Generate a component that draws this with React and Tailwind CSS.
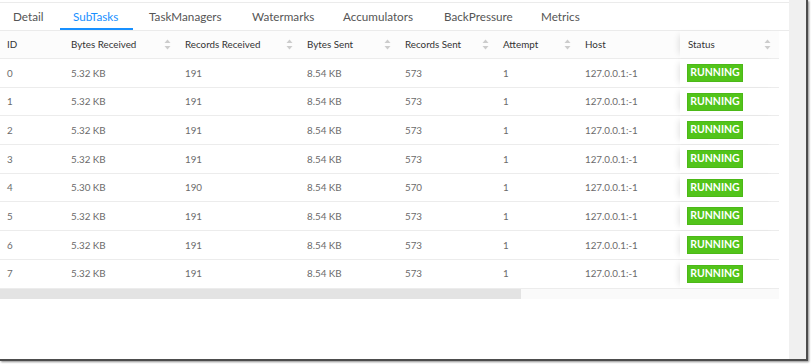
import React from "react";

const tabs = [
  { label: "Detail", w: "w-[60px]" },
  { label: "SubTasks", w: "w-[76px]", active: true },
  { label: "TaskManagers", w: "w-[103px]" },
  { label: "Watermarks", w: "w-[91px]" },
  { label: "Accumulators", w: "w-[101px]" },
  { label: "BackPressure", w: "w-[97px]" },
  { label: "Metrics", w: "w-[80px]" },
];

const cols = [
  { label: "ID", w: "w-[64px]", sort: false },
  { label: "Bytes Received", w: "w-[114px]", sort: true },
  { label: "Records Received", w: "w-[122px]", sort: true },
  { label: "Bytes Sent", w: "w-[98px]", sort: true },
  { label: "Records Sent", w: "w-[98px]", sort: true },
  { label: "Attempt", w: "w-[82px]", sort: true },
  { label: "Host", w: "w-[102px]", sort: false },
];

const rows = [
  ["0", "5.32 KB", "191", "8.54 KB", "573", "1", "127.0.0.1:-1"],
  ["1", "5.32 KB", "191", "8.54 KB", "573", "1", "127.0.0.1:-1"],
  ["2", "5.32 KB", "191", "8.54 KB", "573", "1", "127.0.0.1:-1"],
  ["3", "5.32 KB", "191", "8.54 KB", "573", "1", "127.0.0.1:-1"],
  ["4", "5.30 KB", "190", "8.54 KB", "570", "1", "127.0.0.1:-1"],
  ["5", "5.32 KB", "191", "8.54 KB", "573", "1", "127.0.0.1:-1"],
  ["6", "5.32 KB", "191", "8.54 KB", "573", "1", "127.0.0.1:-1"],
  ["7", "5.32 KB", "191", "8.54 KB", "573", "1", "127.0.0.1:-1"],
];

function SortIcon() {
  return (
    <svg width="7" height="11" viewBox="0 0 7 11" className="shrink-0">
      <path d="M3.5 0.5 L6.5 4 L0.5 4 Z" fill="#cccccc" />
      <path d="M3.5 10.5 L6.5 7 L0.5 7 Z" fill="#cccccc" />
    </svg>
  );
}

export default function App() {
  return (
    <div className="w-[811px] h-[364px] bg-white overflow-hidden font-['Lato',sans-serif]">
      <div className="w-[808px] h-[361px] flex border-r-2 border-b-2 border-[#4d4d4d] shadow-[1px_1px_2px_rgba(0,0,0,0.45)]">
        <div className="w-[789px] flex flex-col pt-[2px]">
          {/* tabs */}
          <div className="h-[29px] border-t border-b border-[#ebebeb] flex">
            {tabs.map((t) => (
              <div key={t.label} className={`${t.w} h-full flex flex-col shrink-0`}>
                <div
                  className={`flex-1 flex items-center pl-[13px] pt-[3px] text-[11.7px] ${
                    t.active ? "text-[#1890ff]" : "text-[#555]"
                  }`}
                >
                  {t.label}
                </div>
                <div className={`h-[2px] w-[73px] ${t.active ? "bg-[#1890ff]" : "bg-transparent"}`} />
              </div>
            ))}
          </div>
          {/* table */}
          <div className="w-[779px] text-[9.8px]">
            <div className="flex h-[28px] border-b border-[#ececec] bg-[#fcfcfc] text-[#333]">
              {cols.map((c) => (
                <div key={c.label} className={`${c.w} shrink-0 flex items-center justify-between pl-[7px] pr-[7px]`}>
                  <span>{c.label}</span>
                  {c.sort && <SortIcon />}
                </div>
              ))}
              <div className="w-[99px] shrink-0 flex items-center justify-between pl-[8px] pr-[8px] bg-[#fcfcfc] shadow-[-5px_0_6px_-4px_rgba(0,0,0,0.12)]">
                <span>Status</span>
                <SortIcon />
              </div>
            </div>
            {rows.map((r, i) => (
              <div key={i} className="flex h-[28.7px] border-b border-[#ececec] text-[#6b6b6b]">
                {r.map((v, j) => (
                  <div key={j} className={`${cols[j].w} shrink-0 flex items-center pl-[7px]`}>
                    {v}
                  </div>
                ))}
                <div className="w-[99px] shrink-0 flex items-center pl-[7px] bg-white shadow-[-5px_0_6px_-4px_rgba(0,0,0,0.12)]">
                  <span className="h-[18px] w-[56px] flex items-center justify-center bg-[#52c41a] border border-[#4cb818] text-white font-bold text-[10.5px]">
                    RUNNING
                  </span>
                </div>
              </div>
            ))}
            <div className="flex h-[10px]">
              <div className="w-[521px] bg-[#e3e3e3]" />
              <div className="flex-1 bg-[#fafafa]" />
            </div>
          </div>
        </div>
        <div className="w-[17px] bg-[#f0f0f0]" />
      </div>
    </div>
  );
}
